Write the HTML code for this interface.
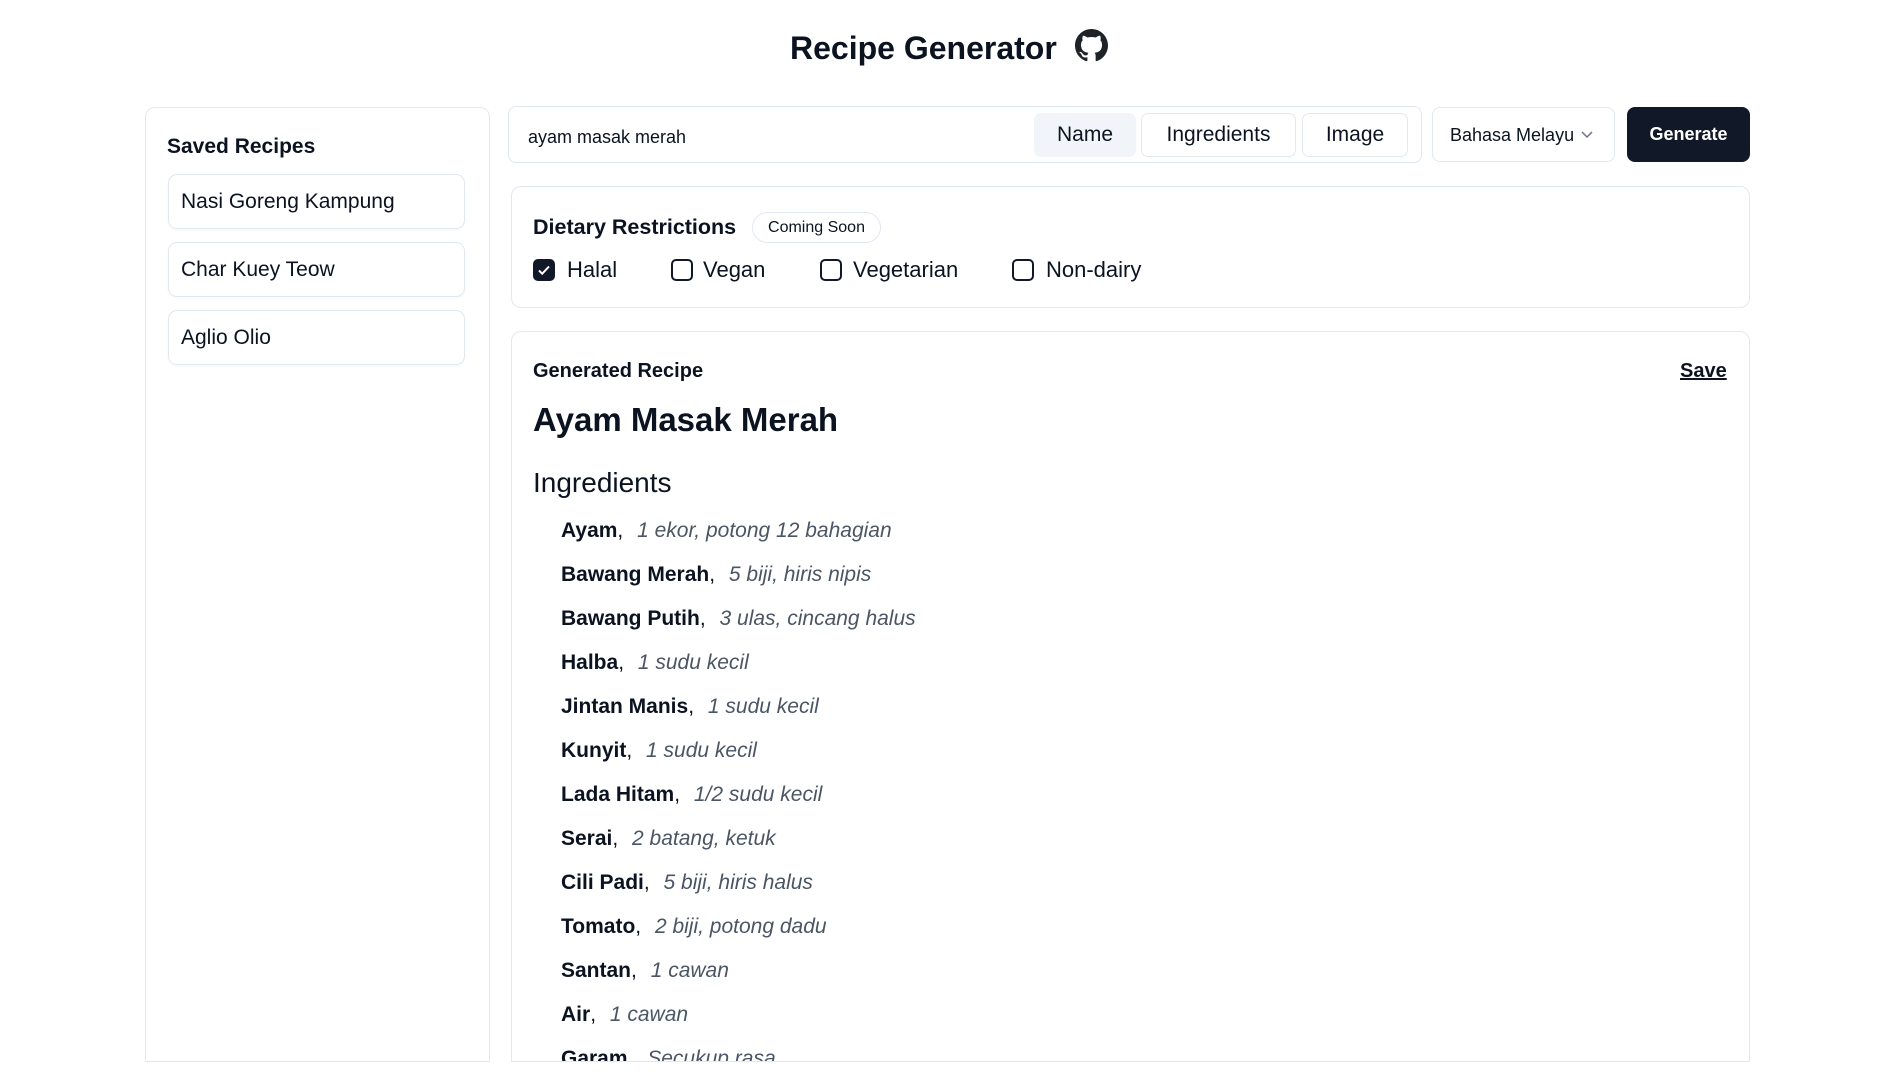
<!DOCTYPE html>
<html><head><meta charset="utf-8"><style>
*{box-sizing:border-box;margin:0;padding:0}
body{width:1894px;height:1082px;overflow:hidden;background:#fff;font-family:"Liberation Sans",sans-serif;color:#0b1220;position:relative}
.a{position:absolute}
.card{position:absolute;border:1px solid #e2e8f0;border-radius:10px;background:#fff}
.item{position:absolute;left:168px;width:297px;height:55px;border:1px solid #e2e8f0;border-radius:9px;font-size:21px;padding-left:12px;line-height:53px;box-shadow:0 1px 2px rgba(0,0,0,.04)}
.btn{position:absolute;top:113px;height:44px;border:1px solid #e2e8f0;border-radius:7px;font-size:21px;line-height:42px;text-align:center}
.cb{position:absolute;top:259px;width:22px;height:22px;border:2px solid #111827;border-radius:5px}
.cl{position:absolute;top:256px;font-size:22px;line-height:28px}
.ing{position:absolute;left:561px;font-size:21px;line-height:28px;white-space:nowrap}
.ing b{font-weight:bold}
.ing i{color:#4b5563;margin-left:8px}
</style></head><body>
<div class="a" style="left:790px;top:28px;font-size:32px;font-weight:bold;line-height:40px">Recipe Generator</div>
<svg class="a" style="left:1075px;top:29px" width="33" height="33" viewBox="0 0 16 16"><path fill="#1f2328" d="M8 0C3.58 0 0 3.58 0 8c0 3.54 2.29 6.53 5.47 7.59.4.07.55-.17.55-.38 0-.19-.01-.82-.01-1.49-2.01.37-2.53-.49-2.69-.94-.09-.23-.48-.94-.82-1.13-.28-.15-.68-.52-.01-.53.63-.01 1.08.58 1.23.82.72 1.21 1.87.87 2.33.66.07-.52.28-.87.51-1.07-1.78-.2-3.64-.89-3.64-3.95 0-.87.31-1.59.82-2.15-.08-.2-.36-1.020.08-2.12 0 0 .67-.21 2.2.82.64-.18 1.32-.27 2-.27.68 0 1.36.09 2 .27 1.53-1.04 2.2-.82 2.2-.82.44 1.1.16 1.92.08 2.12.51.56.82 1.27.82 2.15 0 3.07-1.87 3.75-3.65 3.95.29.25.54.73.54 1.48 0 1.07-.01 1.93-.01 2.2 0 .21.15.46.55.38A8.013 8.013 0 0016 8c0-4.42-3.58-8-8-8z"/></svg>

<div class="card" style="left:145px;top:107px;width:345px;height:955px;border-bottom:none;border-radius:10px 10px 0 0"></div>
<div class="a" style="left:145px;top:1061px;width:345px;height:1px;background:#e2e8f0"></div>
<div class="a" style="left:167px;top:134px;font-size:21px;font-weight:bold;line-height:26px">Saved Recipes</div>
<div class="item" style="top:174px">Nasi Goreng Kampung</div>
<div class="item" style="top:242px">Char Kuey Teow</div>
<div class="item" style="top:310px">Aglio Olio</div>

<div class="card" style="left:508px;top:106px;width:914px;height:57px;border-radius:8px"></div>
<div class="a" style="left:528px;top:125px;font-size:18px;line-height:24px">ayam masak merah</div>
<div class="btn" style="left:1034px;width:102px;background:#f1f5f9;border-color:#f1f5f9">Name</div>
<div class="btn" style="left:1141px;width:155px">Ingredients</div>
<div class="btn" style="left:1302px;width:106px">Image</div>
<div class="card" style="left:1432px;top:107px;width:183px;height:55px;border-radius:8px"></div>
<div class="a" style="left:1450px;top:123px;font-size:18px;line-height:24px">Bahasa Melayu</div>
<svg class="a" style="left:1580px;top:130px" width="14" height="10" viewBox="0 0 14 10"><path d="M2 2l5 5 5-5" fill="none" stroke="#6b7280" stroke-width="1.5"/></svg>
<div class="a" style="left:1627px;top:107px;width:123px;height:55px;background:#111827;border-radius:8px;color:#fff;font-size:18px;font-weight:bold;text-align:center;line-height:55px">Generate</div>

<div class="card" style="left:511px;top:186px;width:1239px;height:122px"></div>
<div class="a" style="left:533px;top:214px;font-size:21.5px;font-weight:bold;line-height:26px">Dietary Restrictions</div>
<div class="a" style="left:752px;top:212px;width:129px;height:31px;border:1px solid #e2e8f0;border-radius:16px;font-size:16px;text-align:center;line-height:29px">Coming Soon</div>
<div class="cb" style="left:533px;background:#111827"><svg width="18" height="18" viewBox="0 0 18 18" style="position:absolute;left:0;top:0"><path d="M4 9.5l3.2 3.2L14 5.5" fill="none" stroke="#fff" stroke-width="2"/></svg></div>
<div class="cl" style="left:567px">Halal</div>
<div class="cb" style="left:671px"></div>
<div class="cl" style="left:703px">Vegan</div>
<div class="cb" style="left:820px"></div>
<div class="cl" style="left:853px">Vegetarian</div>
<div class="cb" style="left:1012px"></div>
<div class="cl" style="left:1046px">Non-dairy</div>

<div class="card" style="left:511px;top:331px;width:1239px;height:731px;border-bottom:none;border-radius:10px 10px 0 0"></div>
<div class="a" style="left:511px;top:1061px;width:1239px;height:1px;background:#e2e8f0"></div>
<div class="a" style="left:533px;top:358px;font-size:20px;font-weight:bold;line-height:26px">Generated Recipe</div>
<div class="a" style="left:1680px;top:358px;font-size:20px;font-weight:bold;line-height:26px;text-decoration:underline">Save</div>
<div class="a" style="left:533px;top:400px;font-size:33px;font-weight:bold;line-height:40px">Ayam Masak Merah</div>
<div class="a" style="left:533px;top:466px;font-size:28px;line-height:34px">Ingredients</div>
<div style="position:absolute;left:0;top:0;width:1894px;height:1061px;overflow:hidden">
<div class="ing" style="top:517px"><b>Ayam</b>, <i>1 ekor, potong 12 bahagian</i></div>
<div class="ing" style="top:561px"><b>Bawang Merah</b>, <i>5 biji, hiris nipis</i></div>
<div class="ing" style="top:605px"><b>Bawang Putih</b>, <i>3 ulas, cincang halus</i></div>
<div class="ing" style="top:649px"><b>Halba</b>, <i>1 sudu kecil</i></div>
<div class="ing" style="top:693px"><b>Jintan Manis</b>, <i>1 sudu kecil</i></div>
<div class="ing" style="top:737px"><b>Kunyit</b>, <i>1 sudu kecil</i></div>
<div class="ing" style="top:781px"><b>Lada Hitam</b>, <i>1/2 sudu kecil</i></div>
<div class="ing" style="top:825px"><b>Serai</b>, <i>2 batang, ketuk</i></div>
<div class="ing" style="top:869px"><b>Cili Padi</b>, <i>5 biji, hiris halus</i></div>
<div class="ing" style="top:913px"><b>Tomato</b>, <i>2 biji, potong dadu</i></div>
<div class="ing" style="top:957px"><b>Santan</b>, <i>1 cawan</i></div>
<div class="ing" style="top:1001px"><b>Air</b>, <i>1 cawan</i></div>
<div class="ing" style="top:1045px"><b>Garam</b>, <i>Secukup rasa</i></div>
</div>
</body></html>
